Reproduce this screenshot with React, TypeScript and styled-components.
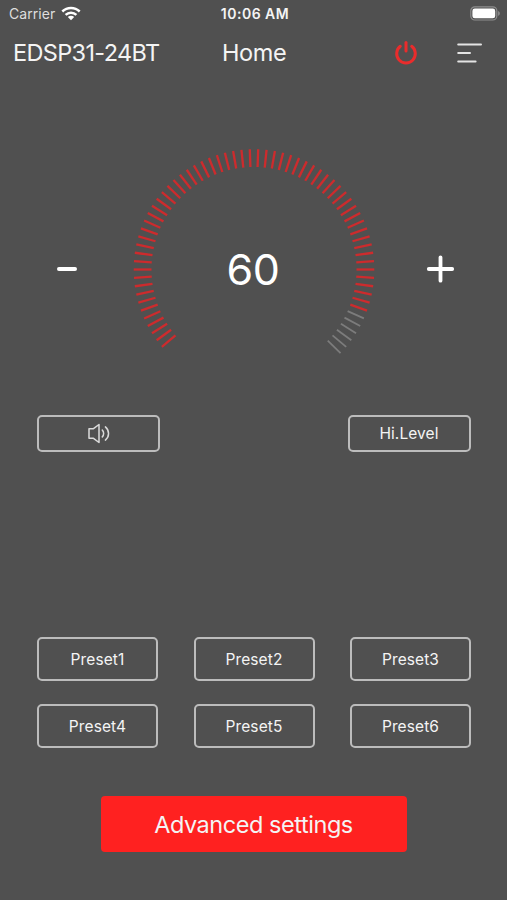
import React from "react";
import styled, { createGlobalStyle } from "styled-components";

const GlobalStyle = createGlobalStyle`
  * { box-sizing: border-box; }
  body { margin: 0; background: #505050; }
  button { font: inherit; color: inherit; background: none; border: 0; padding: 0; margin: 0; }
`;

const Screen = styled.main`
  width: 507px;
  height: 900px;
  display: flex;
  flex-direction: column;
  overflow: hidden;
  background: #505050;
  color: #f4f4f4;
  font-family: Inter, "Liberation Sans", sans-serif;
`;

const StatusBar = styled.div`
  height: 27px;
  display: grid;
  grid-template-columns: 1fr auto 1fr;
  align-items: center;
  padding: 0 6px 0 9px;
`;

const Carrier = styled.div`
  display: flex;
  align-items: center;
  gap: 6px;
  font-size: 14px;
  letter-spacing: 0.05px;
  color: #dedede;
`;

const Clock = styled.div`
  font-size: 14px;
  font-weight: 600;
  letter-spacing: 0.5px;
`;

const BatterySlot = styled.div`
  display: flex;
  justify-content: flex-end;
`;

const Header = styled.header`
  height: 51px;
  display: grid;
  grid-template-columns: 209px 90px 1fr;
  align-items: center;
  padding: 0 25px 0 13px;
`;

const HeaderText = styled.div<{ $spacing: number }>`
  font-size: 23.5px;
  line-height: 28px;
  letter-spacing: ${(p) => p.$spacing}px;
  white-space: nowrap;
`;

const HeaderActions = styled.div`
  display: flex;
  justify-content: flex-end;
  align-items: center;
  gap: 39px;
`;

const IconButton = styled.button`
  display: flex;
`;

const VolumeRow = styled.section`
  height: 337px;
  display: grid;
  grid-template-columns: 134px 240px 133px;
  padding-top: 70px;
`;

const StepButton = styled.button`
  display: flex;
  height: 242px;
  align-items: center;
  justify-content: center;
`;

const Dial = styled.div`
  display: grid;
  grid-template-columns: 242px;
  justify-content: center;
  height: 242px;
  place-items: center;
  & > * { grid-area: 1 / 1; }
`;

const DialValue = styled.span`
  font-size: 43px;
  line-height: 48px;
  letter-spacing: -0.4px;
  padding-right: 2px;
  color: #fff;
`;

const OutputRow = styled.section`
  display: flex;
  justify-content: space-between;
  padding: 0 36.5px 0 37px;
  height: 222px;
  align-items: flex-start;
`;

const OutlineButton = styled.button<{ $height: number; $width?: number }>`
  display: flex;
  align-items: center;
  justify-content: center;
  height: ${(p) => p.$height}px;
  width: ${(p) => (p.$width ? `${p.$width}px` : "100%")};
  border: 2px solid #bcbcbc;
  border-radius: 5px;
  font-size: 15.5px;
  letter-spacing: 0.1px;
`;

const PresetGrid = styled.section`
  display: grid;
  grid-template-columns: repeat(3, 121px);
  justify-content: space-between;
  row-gap: 23px;
  padding: 0 36px 0 37px;
`;

const AdvancedButton = styled.button`
  align-self: center;
  width: 306px;
  height: 56px;
  margin-top: 48px;
  border-radius: 4px;
  background: #ff2120;
  font-size: 23.5px;
  letter-spacing: -0.45px;
`;

const TICK_STEP = 4;
const FIRST_TICK = 140;
const TICK_COUNT = 67;

function DialTicks({ level }: { level: number }) {
  return (
    <svg width="242" height="242" viewBox="-121 -121 242 242">
      {Array.from({ length: TICK_COUNT }, (_, i) => {
        const active = i <= level;
        return (
          <line
            key={i}
            x1="102.5"
            x2="120.3"
            y1="0"
            y2="0"
            stroke={active ? "#cd2b2d" : "#7c7c7c"}
            strokeWidth={active ? 2.3 : 1.8}
            transform={`translate(0 0.5) rotate(${FIRST_TICK + i * TICK_STEP})`}
          />
        );
      })}
    </svg>
  );
}

const WifiIcon = () => (
  <svg width="20" height="15" viewBox="0 0 20 15" fill="none" stroke="#fff" strokeWidth="2.5">
    <path d="M1.3 5.5C6.2.8 13.8.8 18.7 5.5" />
    <path d="M4.6 8.8C7.7 5.9 12.3 5.9 15.4 8.8" />
    <path d="M10 14.2L6.8 11C8.7 9.3 11.3 9.3 13.2 11Z" fill="#fff" stroke="none" />
  </svg>
);

const BatteryIcon = () => (
  <svg width="31" height="15" viewBox="0 0 31 15">
    <rect x="0.8" y="0.8" width="26" height="13.2" rx="4" fill="none" stroke="#8d8d8d" strokeWidth="1.2" />
    <rect x="2.4" y="2.5" width="22.8" height="9.8" rx="2.4" fill="#fff" />
    <path d="M28.2 5C30.3 5.8 30.3 9 28.2 9.8Z" fill="#929292" />
  </svg>
);

const PowerIcon = () => (
  <svg width="24" height="26" viewBox="0 0 24 26" fill="none" stroke="#e92c2c" strokeWidth="3" strokeLinecap="round">
    <path d="M6.3 6.3A9.3 9.3 0 1 0 17.7 6.3" />
    <path d="M12 2.5V11" />
  </svg>
);

const MenuIcon = () => (
  <svg width="25" height="22" viewBox="0 0 25 22" stroke="#e4e4e4" strokeWidth="2" strokeLinecap="round">
    <path d="M1.2 2.4H24M1.2 11H13M1.2 19.5H18.6" />
  </svg>
);

const MinusIcon = () => (
  <svg width="22" height="6" viewBox="0 0 22 6" stroke="#fff" strokeWidth="3.8" strokeLinecap="round">
    <path d="M2.9 3H19.1" />
  </svg>
);

const PlusIcon = () => (
  <svg width="29" height="29" viewBox="0 0 29 29" stroke="#fff" strokeWidth="3.8" strokeLinecap="round">
    <path d="M2.8 14H26.2M14.5 2.3V25.7" />
  </svg>
);

const SpeakerIcon = () => (
  <svg width="24" height="22" viewBox="0 0 24 22" fill="none" stroke="#dadada" strokeWidth="1.5" strokeLinecap="round" strokeLinejoin="round">
    <path d="M2 5.7H6.5L12 1.5V19.5L6.5 15.3H2ZM12 1.5" />
    <path d="M15.3 7.1C17.1 8.9 17.1 12.1 15.3 13.9" />
    <path d="M18.4 3.9C22.6 7.5 22.6 13.5 18.4 17.1" />
  </svg>
);

const presets = ["Preset1", "Preset2", "Preset3", "Preset4", "Preset5", "Preset6"];

export default function App() {
  const volume = 60;
  return (
    <>
      <GlobalStyle />
      <Screen>
        <StatusBar>
          <Carrier>
            Carrier
            <WifiIcon />
          </Carrier>
          <Clock>10:06 AM</Clock>
          <BatterySlot>
            <BatteryIcon />
          </BatterySlot>
        </StatusBar>
        <Header>
          <HeaderText $spacing={-0.65}>EDSP31-24BT</HeaderText>
          <HeaderText $spacing={-0.4}>Home</HeaderText>
          <HeaderActions>
            <IconButton aria-label="Power">
              <PowerIcon />
            </IconButton>
            <IconButton aria-label="Menu">
              <MenuIcon />
            </IconButton>
          </HeaderActions>
        </Header>
        <VolumeRow>
          <StepButton aria-label="Volume down">
            <MinusIcon />
          </StepButton>
          <Dial>
            <DialTicks level={volume} />
            <DialValue>{volume}</DialValue>
          </Dial>
          <StepButton aria-label="Volume up">
            <PlusIcon />
          </StepButton>
        </VolumeRow>
        <OutputRow>
          <OutlineButton $width={123} $height={37} aria-label="Mute">
            <SpeakerIcon />
          </OutlineButton>
          <OutlineButton $width={123} $height={37}>Hi.Level</OutlineButton>
        </OutputRow>
        <PresetGrid>
          {presets.map((name) => (
            <OutlineButton key={name} $height={44}>
              {name}
            </OutlineButton>
          ))}
        </PresetGrid>
        <AdvancedButton>Advanced settings</AdvancedButton>
      </Screen>
    </>
  );
}
